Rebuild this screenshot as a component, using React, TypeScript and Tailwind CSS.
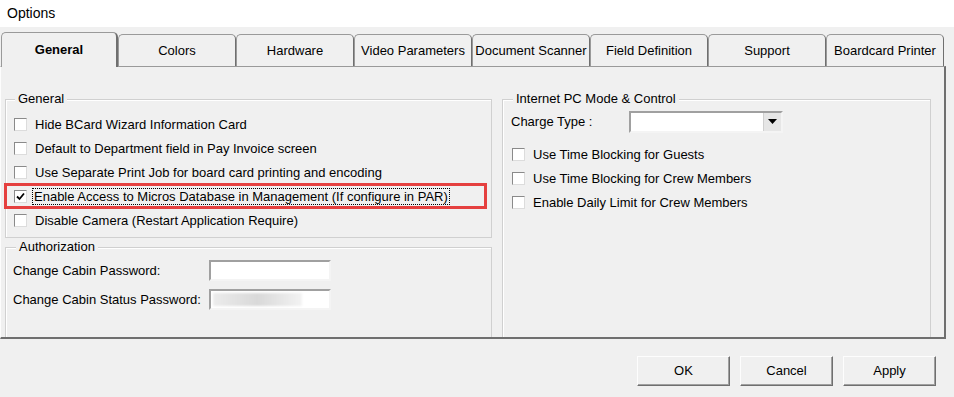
import React from 'react';

const tabs = ['General', 'Colors', 'Hardware', 'Video Parameters', 'Document Scanner', 'Field Definition', 'Support', 'Boardcard Printer'];

const Check: React.FC<{ checked?: boolean }> = ({ checked }) => (
  <span className="w-[13px] h-[13px] shrink-0 bg-white border border-t-[#8a8a8a] border-l-[#8a8a8a] border-r-[#dcdcdc] border-b-[#dcdcdc] flex items-center justify-center">
    {checked && (
      <svg width="9" height="9" viewBox="0 0 9 9">
        <path d="M1 4.5 L3.5 7 L8 1.5" stroke="#000" strokeWidth="1.8" fill="none" />
      </svg>
    )}
  </span>
);

const CheckRow: React.FC<{ label: string; checked?: boolean; focus?: boolean }> = ({ label, checked, focus }) => (
  <div className="h-[24px] flex items-center gap-[8px]">
    <Check checked={checked} />
    <span className={focus ? 'outline outline-1 outline-dotted outline-black px-[1px] -ml-[2px] leading-[15px]' : 'leading-[15px]'}>{label}</span>
  </div>
);

const Group: React.FC<{ title: string; className?: string; legendLeft?: string; children?: React.ReactNode }> = ({ title, className, legendLeft, children }) => (
  <div className={`relative border border-[#d0d0d0] shadow-[inset_1px_1px_0_#fff] ${className ?? ''}`}>
    <span className={`absolute -top-[9px] ${legendLeft ?? 'left-[9px]'} bg-[#f0f0f0] px-[3px] leading-[16px]`}>{title}</span>
    {children}
  </div>
);

const Sunken: React.FC<{ className?: string; children?: React.ReactNode }> = ({ className, children }) => (
  <div className={`bg-white border-2 border-t-[#a0a0a0] border-l-[#a0a0a0] border-r-[#f4f4f4] border-b-[#f4f4f4] ${className ?? ''}`}>
    {children}
  </div>
);

const Btn: React.FC<{ label: string }> = ({ label }) => (
  <button className="w-[93px] h-[30px] bg-[#f0f0f0] border border-t-[#fdfdfd] border-l-[#fdfdfd] border-r-[#6f6f6f] border-b-[#6f6f6f] shadow-[inset_-1px_-1px_0_#a0a0a0] text-[13px]">
    {label}
  </button>
);

export default function App() {
  return (
    <div className="w-[954px] h-[397px] bg-[#f0f0f0] flex flex-col overflow-hidden text-[13px] text-black" style={{ fontFamily: '"Liberation Sans", Arial, sans-serif' }}>
      <div className="h-[27px] bg-white pl-[7px] flex items-center text-[14px]">Options</div>

      <div className="pt-[5px] pl-[1px] flex items-end h-[39px] relative z-10">
        {tabs.map((t, i) =>
          i === 0 ? (
            <div key={t} className="w-[117px] h-[35px] -mb-[1px] bg-[#f0f0f0] border border-b-0 border-[#9a9a9a] border-r-[#6f6f6f] border-r-2 rounded-t-[5px] flex items-center justify-center font-bold pb-[1px]">
              {t}
            </div>
          ) : (
            <div key={t} className="w-[118px] h-[32px] bg-[#f0f0f0] border border-b-0 border-[#9a9a9a] border-r-[#6f6f6f] rounded-t-[5px] flex items-center justify-center pt-[1px]">
              {t}
            </div>
          )
        )}
      </div>

      <div className="relative w-[946px] h-[273px] border border-t-[#9a9a9a] border-l-[#fdfdfd] border-r-2 border-b-2 border-r-[#6f6f6f] border-b-[#6f6f6f] flex gap-[10px] pl-[4px] pt-[32px] overflow-hidden">
        <div className="w-[487px] flex flex-col">
          <Group title="General" className="h-[139px] pl-[8px] pt-[12px]">
            <CheckRow label="Hide BCard Wizard Information Card" />
            <CheckRow label="Default to Department field in Pay Invoice screen" />
            <CheckRow label="Use Separate Print Job for board card printing and encoding" />
            <CheckRow label="Enable Access to Micros Database in Management (If configure in PAR)" checked focus />
            <CheckRow label="Disable Camera (Restart Application Require)" />
          </Group>
          <Group title="Authorization" legendLeft="left-[10px]" className="mt-[9px] flex-1 -mb-[2px] pl-[7px] pt-[12px] flex flex-col gap-[8px]">
            <div className="flex items-center h-[21px]">
              <span className="w-[196px]">Change Cabin Password:</span>
              <Sunken className="w-[122px] h-[21px]" />
            </div>
            <div className="flex items-center h-[21px]">
              <span className="w-[196px]">Change Cabin Status Password:</span>
              <Sunken className="w-[122px] h-[21px] pl-[2px] pt-[2px]">
                <div className="w-[89px] h-[13px] bg-gradient-to-r from-[#ececec] via-[#d9d9d9] to-[#f3f3f3] blur-[1px]" />
              </Sunken>
            </div>
          </Group>
        </div>

        <Group title="Internet PC Mode & Control" legendLeft="left-[10px]" className="w-[429px] -mb-[2px] pl-[8px] pt-[10px]">
          <div className="flex items-center h-[23px]">
            <span className="w-[118px]">Charge Type :</span>
            <Sunken className="w-[154px] h-[22px] flex justify-end items-stretch p-0">
              <div className="w-[18px] bg-[#e6e6e6] border-l border-[#d0d0d0] flex items-center justify-center">
                <svg width="9" height="5" viewBox="0 0 9 5">
                  <path d="M0 0 H9 L4.5 5 Z" fill="#000" />
                </svg>
              </div>
            </Sunken>
          </div>
          <div className="pt-[9px] pl-[1px]">
            <CheckRow label="Use Time Blocking for Guests" />
            <CheckRow label="Use Time Blocking for Crew Members" />
            <CheckRow label="Enable Daily Limit for Crew Members" />
          </div>
        </Group>

        <div className="absolute left-[3px] top-[116px] w-[483px] h-[26px] border-[3px] border-[#e5403f] pointer-events-none" />
      </div>

      <div className="flex justify-end gap-[10px] pr-[18px] pt-[17px]">
        <Btn label="OK" />
        <Btn label="Cancel" />
        <Btn label="Apply" />
      </div>
    </div>
  );
}
